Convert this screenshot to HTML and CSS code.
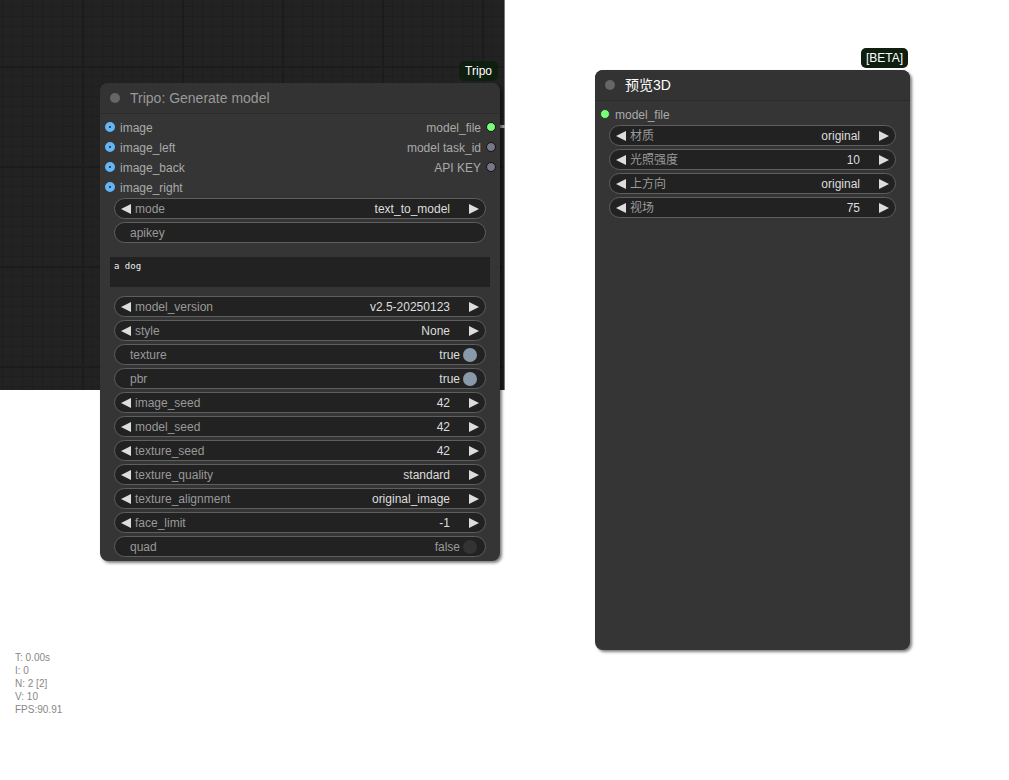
FILE: index.html
```html
<!DOCTYPE html>
<html lang="zh-CN">
<head>
<meta charset="utf-8">
<title>Node graph</title>
<link rel="stylesheet" href="styles.css">
</head>
<body>
<svg class="defs" width="0" height="0" aria-hidden="true">
  <symbol id="prev" viewBox="0 0 10 10"><path d="M10 0V10L0 5Z" fill="#ddd"/></symbol>
  <symbol id="next" viewBox="0 0 10 10"><path d="M0 0V10L10 5Z" fill="#ddd"/></symbol>
</svg>
<main class="canvas">
  <div class="grid"></div>
  <div class="link"></div>

  <section class="node node-tripo">
    <span class="badge badge-tripo">Tripo</span>
    <header class="title"><span class="collapse"></span><h2>Tripo: Generate model</h2></header>
    <div class="slots">
      <ul class="inputs">
        <li><span class="dot ring"></span>image</li>
        <li><span class="dot ring"></span>image_left</li>
        <li><span class="dot ring"></span>image_back</li>
        <li><span class="dot ring"></span>image_right</li>
      </ul>
      <ul class="outputs">
        <li>model_file<span class="dot out green"></span></li>
        <li>model task_id<span class="dot out"></span></li>
        <li>API KEY<span class="dot out"></span></li>
      </ul>
    </div>
    <div class="widgets">
      <div class="widget"><button type="button" aria-label="Previous mode"><svg><use href="#prev"/></svg></button><label for="mode">mode</label><select id="mode"><option>text_to_model</option></select><button type="button" aria-label="Next mode"><svg><use href="#next"/></svg></button></div>
      <div class="widget plain"><label for="apikey">apikey</label><input id="apikey" type="text"></div>
    </div>
    <textarea class="prompt" aria-label="prompt" spellcheck="false">a dog</textarea>
    <div class="widgets">
      <div class="widget"><button type="button" aria-label="Previous model version"><svg><use href="#prev"/></svg></button><label for="version">model_version</label><select id="version"><option>v2.5-20250123</option></select><button type="button" aria-label="Next model version"><svg><use href="#next"/></svg></button></div>
      <div class="widget"><button type="button" aria-label="Previous style"><svg><use href="#prev"/></svg></button><label for="style">style</label><select id="style"><option>None</option></select><button type="button" aria-label="Next style"><svg><use href="#next"/></svg></button></div>
      <div class="widget plain"><label for="texture">texture</label><span class="state">true</span><input id="texture" type="checkbox" checked></div>
      <div class="widget plain"><label for="pbr">pbr</label><span class="state">true</span><input id="pbr" type="checkbox" checked></div>
      <div class="widget"><button type="button" aria-label="Decrease image seed"><svg><use href="#prev"/></svg></button><label for="iseed">image_seed</label><input id="iseed" type="text" value="42"><button type="button" aria-label="Increase image seed"><svg><use href="#next"/></svg></button></div>
      <div class="widget"><button type="button" aria-label="Decrease model seed"><svg><use href="#prev"/></svg></button><label for="mseed">model_seed</label><input id="mseed" type="text" value="42"><button type="button" aria-label="Increase model seed"><svg><use href="#next"/></svg></button></div>
      <div class="widget"><button type="button" aria-label="Decrease texture seed"><svg><use href="#prev"/></svg></button><label for="tseed">texture_seed</label><input id="tseed" type="text" value="42"><button type="button" aria-label="Increase texture seed"><svg><use href="#next"/></svg></button></div>
      <div class="widget"><button type="button" aria-label="Previous texture quality"><svg><use href="#prev"/></svg></button><label for="quality">texture_quality</label><select id="quality"><option>standard</option></select><button type="button" aria-label="Next texture quality"><svg><use href="#next"/></svg></button></div>
      <div class="widget"><button type="button" aria-label="Previous texture alignment"><svg><use href="#prev"/></svg></button><label for="align">texture_alignment</label><select id="align"><option>original_image</option></select><button type="button" aria-label="Next texture alignment"><svg><use href="#next"/></svg></button></div>
      <div class="widget"><button type="button" aria-label="Decrease face limit"><svg><use href="#prev"/></svg></button><label for="faces">face_limit</label><input id="faces" type="text" value="-1"><button type="button" aria-label="Increase face limit"><svg><use href="#next"/></svg></button></div>
      <div class="widget plain"><label for="quad">quad</label><span class="state off">false</span><input id="quad" type="checkbox"></div>
    </div>
  </section>

  <section class="node node-preview">
    <span class="badge badge-beta">[BETA]</span>
    <header class="title selected"><span class="collapse"></span><h2>预览3D</h2></header>
    <div class="slots">
      <ul class="inputs">
        <li><span class="dot green"></span>model_file</li>
      </ul>
    </div>
    <div class="widgets">
      <div class="widget"><button type="button" aria-label="上一个材质"><svg><use href="#prev"/></svg></button><label for="material">材质</label><select id="material"><option>original</option></select><button type="button" aria-label="下一个材质"><svg><use href="#next"/></svg></button></div>
      <div class="widget"><button type="button" aria-label="降低光照强度"><svg><use href="#prev"/></svg></button><label for="light">光照强度</label><input id="light" type="text" value="10"><button type="button" aria-label="提高光照强度"><svg><use href="#next"/></svg></button></div>
      <div class="widget"><button type="button" aria-label="上一个上方向"><svg><use href="#prev"/></svg></button><label for="up">上方向</label><select id="up"><option>original</option></select><button type="button" aria-label="下一个上方向"><svg><use href="#next"/></svg></button></div>
      <div class="widget"><button type="button" aria-label="减小视场"><svg><use href="#prev"/></svg></button><label for="fov">视场</label><input id="fov" type="text" value="75"><button type="button" aria-label="增大视场"><svg><use href="#next"/></svg></button></div>
    </div>
  </section>

  <ul class="stats">
    <li>T: 0.00s</li>
    <li>I: 0</li>
    <li>N: 2 [2]</li>
    <li>V: 10</li>
    <li>FPS:90.91</li>
  </ul>
</main>
</body>
</html>
```

FILE: styles.css
```css
* { box-sizing: border-box; }
body {
  margin: 0;
  background: #fff;
  font: 12px/20px "Liberation Sans", "Noto Sans CJK SC", sans-serif;
  color: #aaa;
}
ul { list-style: none; margin: 0; padding: 0; }
.defs { position: absolute; }
.canvas { position: relative; min-height: 100vh; overflow: hidden; }

.grid {
  position: absolute;
  left: 0;
  top: 0;
  width: 505px;
  height: 390px;
  border-right: 1px solid #777;
  background-color: #222;
  background-image:
    linear-gradient(90deg, #1c1c1c 2px, transparent 2px),
    linear-gradient(#1c1c1c 2px, transparent 2px),
    linear-gradient(90deg, #1e1e1e 1px, transparent 1px),
    linear-gradient(#1e1e1e 1px, transparent 1px);
  background-size: 100px 100px, 100px 100px, 10px 10px, 10px 10px;
  background-position: 82px 0, 0 66px, 2px 0, 0 6px;
}
.link {
  position: absolute;
  left: 496px;
  top: 125px;
  width: 9px;
  height: 3px;
  background: #9aa89a;
}

.node {
  position: absolute;
  border-radius: 8px;
  background: #353535;
  box-shadow: 2px 2px 3px rgba(0, 0, 0, .5);
}
.node-tripo { left: 100px; top: 83px; width: 400px; padding-bottom: 4px; }
.node-preview { left: 595px; top: 70px; width: 315px; height: 580px; }

.badge {
  position: absolute;
  right: 2px;
  bottom: 100%;
  height: 20px;
  margin-bottom: 2px;
  border-radius: 5px;
  padding: 0 6px;
  background: #0f1f0f;
  color: #fff;
}
.badge-beta { padding: 0 5px; }

.title {
  display: flex;
  align-items: center;
  gap: 10px;
  height: 31px;
  padding: 0 10px;
  border-bottom: 1px solid #2b2b2b;
  border-radius: 8px 8px 0 0;
  background: #333;
  color: #999;
}
.title h2 { margin: 0; font-size: 14px; font-weight: 400; line-height: 30px; }
.title.selected { color: #fff; }
.collapse { width: 10px; height: 10px; border-radius: 50%; background: #666; }

.slots { display: flex; justify-content: space-between; margin-top: -1px; padding: 4px 5px 1px; }
.slots li { display: flex; align-items: center; gap: 5px; height: 20px; padding-top: 1px; }
.dot { width: 10px; height: 10px; margin-bottom: 2px; border-radius: 50%; border: 1px solid #353535; background: #778; }
.dot.out { border-color: #111; }
.outputs .dot { margin-right: -1px; }
.outputs li { justify-content: flex-end; }
.dot.ring { border: 4px solid #64b5f6; background: #222; }
.dot.green { background: #7f7; }

.widgets { display: grid; gap: 3px; padding: 0 14px; }
.widget {
  display: flex;
  align-items: center;
  height: 21px;
  padding: 0 6px;
  border: 1px solid #5e5e5e;
  border-radius: 11px;
  background: #222;
  color: #999;
}
.widget.plain { padding: 0 8px 0 15px; }
.widget button { display: flex; flex: none; padding: 0; border: 0; background: none; }
.widget svg { width: 10px; height: 10px; }
.widget label { flex: none; margin-left: 4px; white-space: nowrap; }
.widget.plain label { margin-left: 0; }
.widget select,
.widget input[type="text"] {
  flex: 1;
  width: 0;
  min-width: 0;
  height: 19px;
  margin: 0 19px 0 0;
  padding: 0;
  border: 0;
  outline: 0;
  appearance: none;
  background: none;
  color: #ddd;
  font: inherit;
  text-align: right;
  text-align-last: right;
}
.state { margin-left: auto; color: #ddd; }
.state.off { color: #999; }
.widget input[type="checkbox"] {
  width: 14px;
  height: 14px;
  margin: 0 0 0 3px;
  border-radius: 50%;
  appearance: none;
  background: #333;
}
.widget input[type="checkbox"]:checked { background: #89a; }

.prompt {
  display: block;
  width: calc(100% - 20px);
  height: 30px;
  margin: 14px 10px 9px;
  padding: 4px;
  border: 0;
  resize: none;
  overflow: hidden;
  background: #222;
  color: #eee;
  font: 9px/10px "DejaVu Sans Mono", monospace;
}

.stats {
  position: absolute;
  left: 15px;
  top: 651px;
  color: #888;
  font-size: 10px;
  line-height: 13px;
}
```
